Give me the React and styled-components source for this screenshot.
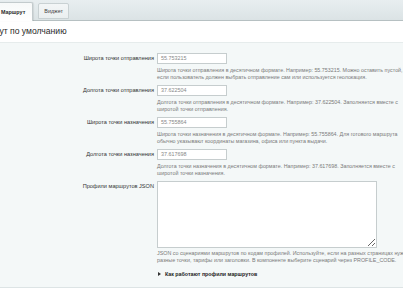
import React from "react";
import styled, { createGlobalStyle, css } from "styled-components";

const GlobalStyle = createGlobalStyle`
  html, body { margin: 0; padding: 0; background: #fff; }
  body { font-family: "Liberation Sans", Arial, sans-serif; overflow: hidden; }
  #root { width: 403px; height: 294px; overflow: hidden; }
`;

const Page = styled.div`
  margin-left: -30px;
  width: 480px;
`;

const TabBar = styled.div`
  height: 21px;
  box-sizing: border-box;
  display: flex;
  align-items: flex-end;
  gap: 5px;
  padding-left: 22px;
  background: linear-gradient(#e8eef0, #dbe3e5);
  border-bottom: 1px solid #b6c0c2;
`;

const Tab = styled.div`
  box-sizing: border-box;
  display: flex;
  align-items: center;
  font-size: 5.4px;
  color: #2b2b2b;
  border-radius: 2px 2px 0 0;
  ${(p) =>
    p.$active
      ? css`
          height: 19px;
          margin-bottom: -1px;
          padding: 0 7px 0 8px;
          font-weight: bold;
          background: linear-gradient(#f7f9f9, #ffffff);
          border: 1px solid #c3cbcd;
          border-bottom: none;
          box-shadow: 1px 0 1px rgba(0, 0, 0, 0.08);
        `
      : css`
          height: 16px;
          margin-bottom: 1px;
          padding: 0 5px;
          background: linear-gradient(#f3f6f7, #eaeff0);
          border: 1px solid #c9d1d3;
          color: #444;
        `}
`;

const Title = styled.div`
  height: 21px;
  line-height: 21px;
  padding-left: 1px;
  font-size: 8.6px;
  color: #2a2a2a;
  background: #fff;
`;

const Panel = styled.div`
  box-sizing: border-box;
  height: 246px;
  background: #f4f8f8;
  border-top: 1px solid #e6ecec;
  border-bottom: 1px solid #dde4e5;
  padding-top: 10px;
  display: flex;
  flex-direction: column;
  gap: 4px;
`;

const Row = styled.div`
  display: grid;
  grid-template-columns: 184px ${(p) => (p.$wide ? "268px" : "250px")};
  column-gap: 3px;
`;

const Label = styled.div`
  text-align: right;
  font-size: 5.6px;
  line-height: 11px;
  height: 11px;
  color: #333;
`;

const Field = styled.div`
  display: flex;
  flex-direction: column;
`;

const Input = styled.div`
  box-sizing: border-box;
  width: 70px;
  height: 11px;
  line-height: 9px;
  padding-left: 3px;
  font-size: 5.4px;
  color: #888;
  background: #fff;
  border: 1px solid #c6cdce;
`;

const Area = styled.textarea`
  box-sizing: border-box;
  display: block;
  width: 220px;
  height: 67px;
  margin: 0;
  padding: 2px;
  background: #fff;
  border: 1px solid #c6cdce;
  border-radius: 0;
  resize: both;
  outline: none;
`;

const Help = styled.div`
  margin-top: ${(p) => p.$mt || "3px"};
  font-size: 5.35px;
  line-height: 7.2px;
  height: 14px;
  color: #7a7a7a;
`;

const Toggle = styled.div`
  margin-top: 6px;
  display: flex;
  align-items: center;
  gap: 4px;
  padding-left: 1px;
  font-size: 5.3px;
  line-height: 8px;
  font-weight: bold;
  color: #222;
`;

const Arrow = styled.span`
  width: 0;
  height: 0;
  border-left: 3px solid #333;
  border-top: 2px solid transparent;
  border-bottom: 2px solid transparent;
`;

const rows = [
  {
    label: "Широта точки отправления",
    value: "55.753215",
    help: "Широта точки отправления в десятичном формате. Например: 55.753215. Можно оставить пустой, если пользователь должен выбрать отправление сам или используется геолокация.",
  },
  {
    label: "Долгота точки отправления",
    value: "37.622504",
    help: "Долгота точки отправления в десятичном формате. Например: 37.622504. Заполняется вместе с широтой точки отправления.",
  },
  {
    label: "Широта точки назначения",
    value: "55.755864",
    help: "Широта точки назначения в десятичном формате. Например: 55.755864. Для готового маршрута обычно указывают координаты магазина, офиса или пункта выдачи.",
  },
  {
    label: "Долгота точки назначения",
    value: "37.617698",
    help: "Долгота точки назначения в десятичном формате. Например: 37.617698. Заполняется вместе с широтой точки назначения.",
  },
];

export default function App() {
  return (
    <>
      <GlobalStyle />
      <Page>
        <TabBar>
          <Tab $active>Маршрут</Tab>
          <Tab>Виджет</Tab>
        </TabBar>
        <Title>Маршрут по умолчанию</Title>
        <Panel>
          {rows.map((r) => (
            <Row key={r.label}>
              <Label>{r.label}</Label>
              <Field>
                <Input>{r.value}</Input>
                <Help>{r.help}</Help>
              </Field>
            </Row>
          ))}
          <Row $wide>
            <Label>Профили маршрутов JSON</Label>
            <Field>
              <Area readOnly defaultValue="" />
              <Help $mt="2px">
                JSON со сценариями маршрутов по кодам профилей. Используйте, если на разных страницах нужны
                разные точки, тарифы или заголовки. В компоненте выберите сценарий через PROFILE_CODE.
              </Help>
              <Toggle>
                <Arrow />
                Как работают профили маршрутов
              </Toggle>
            </Field>
          </Row>
        </Panel>
      </Page>
    </>
  );
}
